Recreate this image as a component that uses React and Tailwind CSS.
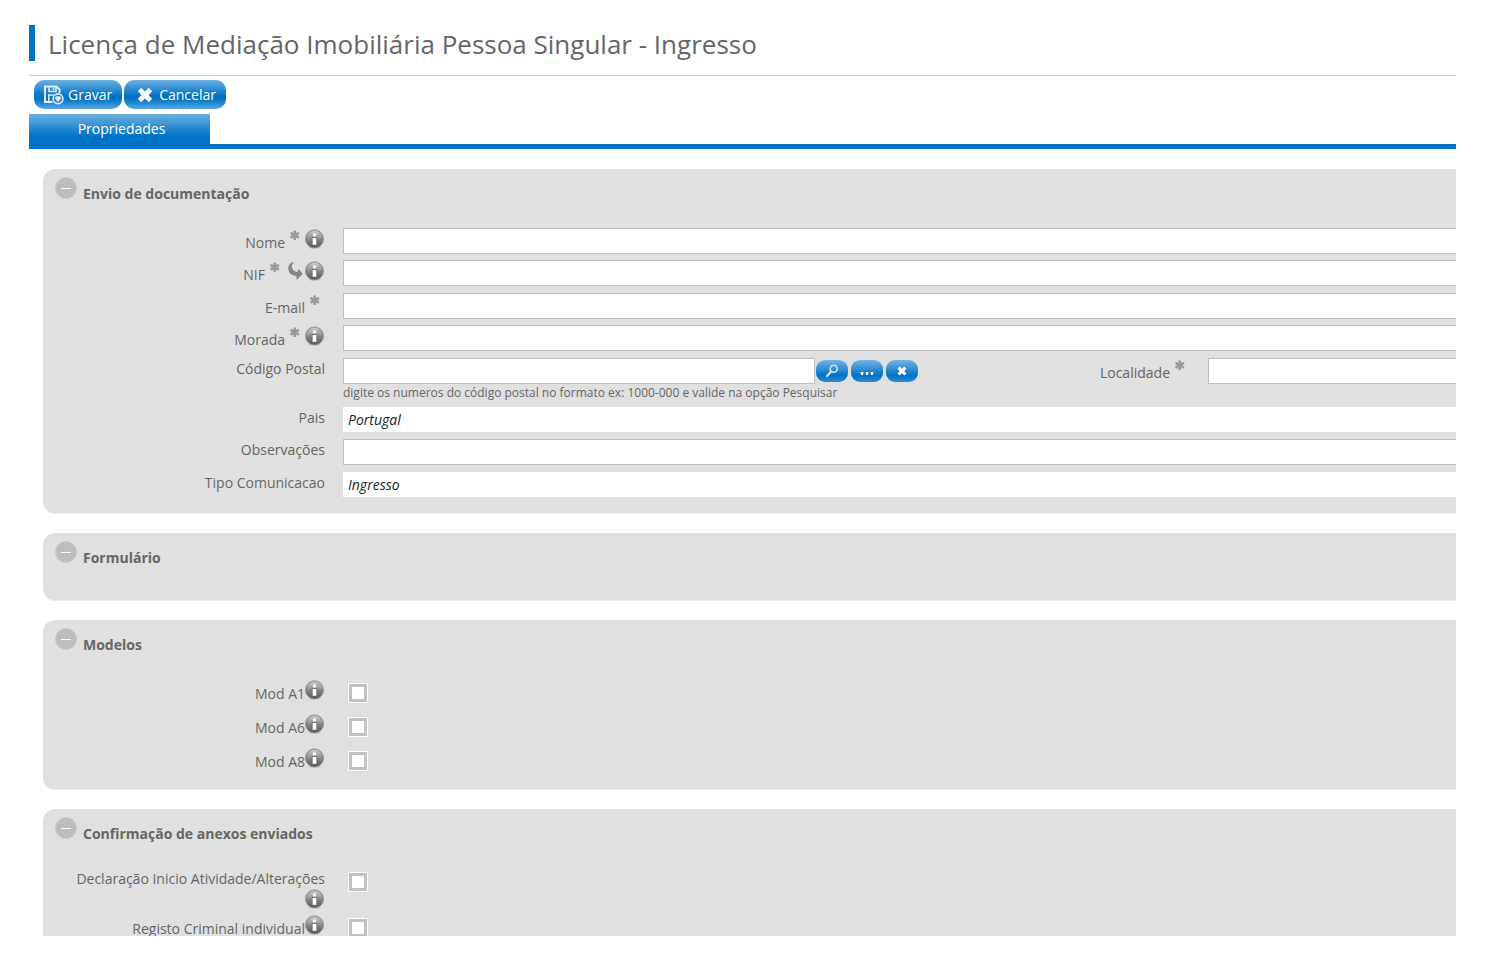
import React, { useId } from "react";

function InfoIcon() {
  const id = useId();
  return (
    <svg className="size-5 shrink-0" viewBox="0 0 20 20" role="img" aria-label="Informação">
      <defs>
        <linearGradient id={id + "a"} x1="0" y1="0" x2="0" y2="1">
          <stop offset="0" stopColor="#a8a8a8" />
          <stop offset="0.45" stopColor="#8e8e8e" />
          <stop offset="1" stopColor="#555555" />
        </linearGradient>
        <linearGradient id={id + "b"} x1="0" y1="0" x2="0" y2="1">
          <stop offset="0" stopColor="#dedede" />
          <stop offset="1" stopColor="#8c8c8c" />
        </linearGradient>
      </defs>
      <ellipse cx="9.5" cy="18.7" rx="7" ry="0.8" fill="#c4c4c4" />
      <circle cx="9.5" cy="9.9" r="9.1" fill={"url(#" + id + "a)"} stroke="#909090" strokeWidth="0.8" />
      <path d="M2 9.300a7.5 7.5 0 0 1 15 0q-7.500 2-15 0Z" fill={"url(#" + id + "b)"} opacity="0.65" />
      <circle cx="9.500" cy="5.800" r="1.900" fill="#f0f0f0" />
      <rect x="7.500" y="9" width="4" height="6.800" fill="#fff" />
      <path d="M7 15.800V8.500h5v7.300" fill="none" stroke="#6c6c6c" strokeWidth="0.7" />
    </svg>
  );
}

function RequiredIcon() {
  return (
    <svg className="size-5 shrink-0" viewBox="0 0 20 20" role="img" aria-label="Obrigatório">
      <g stroke="#9a9a9a" strokeWidth="2.600">
        <path d="M9.700 1.500v9.600M5.500 3.900l8.400 4.800M13.900 3.900L5.500 8.700" />
      </g>
    </svg>
  );
}

function ArrowIcon() {
  return (
    <svg className="size-5 shrink-0" viewBox="0 0 20 20" aria-hidden="true">
      <path
        d="M9.500 1C5 1.500 2.800 4.500 3.300 8.300c.6 4.100 3.600 6.400 8.100 6.600l.2 4 6.200-6.200-4.400-4.900-.7 3.200C9.500 10.700 7.100 9 6.900 5.800 6.800 4 7.700 2.300 9.500 1Z"
        fill="#858585"
      />
    </svg>
  );
}

function SaveIcon() {
  return (
    <svg className="h-5 w-5 shrink-0" viewBox="0 0 20 20" fill="none" stroke="#dcedf9" aria-hidden="true">
      <path d="M8.500 17H1V1.500h11.500L15.500 4.500V8" strokeWidth="2" />
      <path d="M5 2v4.500h7V2M9.500 2.500v2.500" strokeWidth="1.600" />
      <path d="M4.800 17V10h5.200" strokeWidth="1.600" />
      <circle cx="14" cy="13.800" r="4.900" fill="#2583cd" strokeWidth="1.600" />
      <path d="M14 17l-3.300-3.800 1.600-1.900h3.400l1.600 1.900z" fill="#dcedf9" stroke="none" />
    </svg>
  );
}

function CrossIcon({ className }) {
  return (
    <svg className={className} viewBox="0 0 16 16" aria-hidden="true">
      <path
        d="M4.200.8 8 4.400 11.800.8l3.400 3.400L11.600 8l3.600 3.800-3.400 3.400L8 11.600l-3.800 3.600-3.400-3.400L4.400 8 .8 4.200z"
        fill="#fff"
      />
    </svg>
  );
}

function SearchIcon() {
  return (
    <svg className="size-3.5" viewBox="0 0 14 14" fill="none" stroke="#cfe6f7" aria-hidden="true">
      <circle cx="8.700" cy="4.700" r="3.500" strokeWidth="1.600" />
      <path d="M6 7.500 2 12" strokeWidth="2.200" strokeLinecap="round" />
    </svg>
  );
}

function DotsIcon() {
  return (
    <svg className="size-3.5" viewBox="0 0 14 14" fill="#fff" aria-hidden="true">
      <path d="M.5 8h3L3 11H1zM5.500 8h3L8 11H6zM10.500 8h3l-.5 3h-2z" />
    </svg>
  );
}

function ToolbarButton({ children }) {
  return (
    <button
      type="button"
      className="flex h-[29px] items-center rounded-[10px] bg-linear-[180deg,#6cb0e0_0%,#0072c6_55%,#0072c6_65%,#5aa7df_100%] px-[10px] text-sm text-white"
    >
      {children}
    </button>
  );
}

function PillButton({ label, children }) {
  return (
    <button
      type="button"
      aria-label={label}
      className="flex h-[22px] w-8 items-center justify-center rounded-[9px] bg-linear-[180deg,#74b5e4_0%,#0072c6_70%,#2b8ad2_100%]"
    >
      {children}
    </button>
  );
}

function Section({ title, className = "", children }) {
  return (
    <section className={"rounded-l-xl border-b border-[#eeeeee] bg-[#e0e0e0] " + className}>
      <header className="flex h-[59px] items-start gap-[6px] pt-2 pl-3">
        <button
          type="button"
          aria-label={"Recolher " + title}
          className="flex size-[22px] items-center justify-center rounded-full border border-[#c8c8c8] bg-[#bdbdbd]"
        >
          <span className="h-px w-[10px] bg-white" />
        </button>
        <h2 className="pt-[7px] text-sm leading-5 font-bold">{title}</h2>
      </header>
      {children}
    </section>
  );
}

function Label({ htmlFor, icons = false, children, className = "w-[282px]" }) {
  return (
    <label
      htmlFor={htmlFor}
      className={"flex shrink-0 justify-end text-right text-sm leading-5 " + (icons ? "pt-[5px] " : "pt-px ") + className}
    >
      {children}
    </label>
  );
}

function Icons({ children }) {
  return <span className="-mt-1 flex">{children}</span>;
}

const box = "h-[26px] border-y border-l border-[#bebebe] bg-white px-1 text-sm text-[#222222] outline-none";
const readOnlyBox = "h-[25px] bg-white px-[5px] text-sm italic text-[#222222] outline-none";

function Row({ className = "h-8", children }) {
  return <div className={"flex items-start gap-[18px] " + className}>{children}</div>;
}

function CheckRow({ id, className, children }) {
  return (
    <div className={"flex items-start gap-[23px] " + className}>
      {children}
      <input
        id={id}
        type="checkbox"
        className="size-5 appearance-none border border-white bg-white shadow-[inset_0_0_0_3px_#c2c2c2] checked:bg-[#0072c6]"
      />
    </div>
  );
}

export default function App() {
  return (
    <div className="h-screen bg-white pr-[34px] pb-10 pl-[29px] font-['Open_Sans','Noto_Sans',sans-serif] text-[#666666]">
      <main className="h-full overflow-hidden">
        <header className="border-b border-[#cccccc] pt-[25px] pb-[14px]">
          <h1 className="border-l-6 border-[#0072c6] pt-[2px] pl-[13px] text-[26px] leading-[34px] whitespace-nowrap">
            Licença de Mediação Imobiliária Pessoa Singular - Ingresso
          </h1>
        </header>

        <div className="flex gap-[2px] pt-1 pl-[5px]">
          <ToolbarButton>
            <SaveIcon />
            <span className="ml-1">Gravar</span>
          </ToolbarButton>
          <ToolbarButton>
            <CrossIcon className="mr-[2px] ml-[3px] size-4" />
            <span className="ml-1">Cancelar</span>
          </ToolbarButton>
        </div>

        <nav className="mt-[5px] border-b-5 border-[#0072c6]">
          <a
            href="#propriedades"
            className="block h-[30px] w-[181px] bg-linear-[180deg,#6cb0e0_0%,#0072c6_75%] pl-1 text-center text-sm leading-[30px] text-white"
          >
            Propriedades
          </a>
        </nav>

        <form className="flex flex-col gap-[19px] pt-5 pl-[14px]">
          <Section title="Envio de documentação" className="pb-4">
            <Row>
              <Label htmlFor="nome" icons>
                Nome
                <Icons>
                  <RequiredIcon />
                  <InfoIcon />
                </Icons>
              </Label>
              <input id="nome" type="text" className={box + " flex-1"} />
            </Row>
            <Row className="h-[33px]">
              <Label htmlFor="nif" icons>
                NIF
                <Icons>
                  <RequiredIcon />
                  <ArrowIcon />
                  <InfoIcon />
                </Icons>
              </Label>
              <input id="nif" type="text" className={box + " flex-1"} />
            </Row>
            <Row>
              <Label htmlFor="email" icons>
                E-mail
                <Icons>
                  <RequiredIcon />
                </Icons>
              </Label>
              <input id="email" type="text" className={box + " flex-1"} />
            </Row>
            <Row className="h-[33px]">
              <Label htmlFor="morada" icons>
                Morada
                <Icons>
                  <RequiredIcon />
                  <InfoIcon />
                </Icons>
              </Label>
              <input id="morada" type="text" className={box + " flex-1"} />
            </Row>
            <Row className="h-[49px]">
              <Label htmlFor="codigo">Código Postal</Label>
              <div className="flex-1">
                <div className="flex items-start">
                  <input id="codigo" type="text" className={box + " w-[472px] border-r"} />
                  <div className="flex gap-[3px] pt-[2px] pl-px">
                    <PillButton label="Pesquisar">
                      <SearchIcon />
                    </PillButton>
                    <PillButton label="Mais opções">
                      <DotsIcon />
                    </PillButton>
                    <PillButton label="Limpar">
                      <CrossIcon className="size-[10px]" />
                    </PillButton>
                  </div>
                  <Label htmlFor="localidade" icons className="flex-1 pr-[18px]">
                    Localidade
                    <Icons>
                      <RequiredIcon />
                    </Icons>
                  </Label>
                  <input id="localidade" type="text" className={box + " w-[248px]"} />
                </div>
                <p className="pt-px text-xs leading-4">
                  digite os numeros do código postal no formato ex: 1000-000 e valide na opção Pesquisar
                </p>
              </div>
            </Row>
            <Row>
              <Label htmlFor="pais">Pais</Label>
              <input id="pais" type="text" readOnly defaultValue="Portugal" className={readOnlyBox + " flex-1"} />
            </Row>
            <Row className="h-[33px]">
              <Label htmlFor="observacoes">Observações</Label>
              <input id="observacoes" type="text" className={box + " flex-1"} />
            </Row>
            <Row className="h-[25px]">
              <Label htmlFor="tipo">Tipo Comunicacao</Label>
              <input id="tipo" type="text" readOnly defaultValue="Ingresso" className={readOnlyBox + " flex-1"} />
            </Row>
          </Section>

          <Section title="Formulário" className="pb-2" />

          <Section title="Modelos" className="pb-1">
            <div className="pt-1">
              {["A1", "A6", "A8"].map((m) => (
                <CheckRow key={m} id={"mod" + m} className="h-[34px]">
                  <Label htmlFor={"mod" + m}>
                    Mod {m}
                    <Icons>
                      <InfoIcon />
                    </Icons>
                  </Label>
                </CheckRow>
              ))}
            </div>
          </Section>

          <Section title="Confirmação de anexos enviados" className="pb-8">
            <div className="pt-1">
              <CheckRow id="declaracao" className="h-[46px]">
                <Label htmlFor="declaracao" className="w-[282px] flex-col items-end">
                  <span className="-mt-1">Declaração Inicio Atividade/Alterações</span>
                  <InfoIcon />
                </Label>
              </CheckRow>
              <CheckRow id="registo" className="h-[34px]">
                <Label htmlFor="registo">
                  Registo Criminal individual
                  <Icons>
                    <InfoIcon />
                  </Icons>
                </Label>
              </CheckRow>
            </div>
          </Section>
        </form>
      </main>
    </div>
  );
}
